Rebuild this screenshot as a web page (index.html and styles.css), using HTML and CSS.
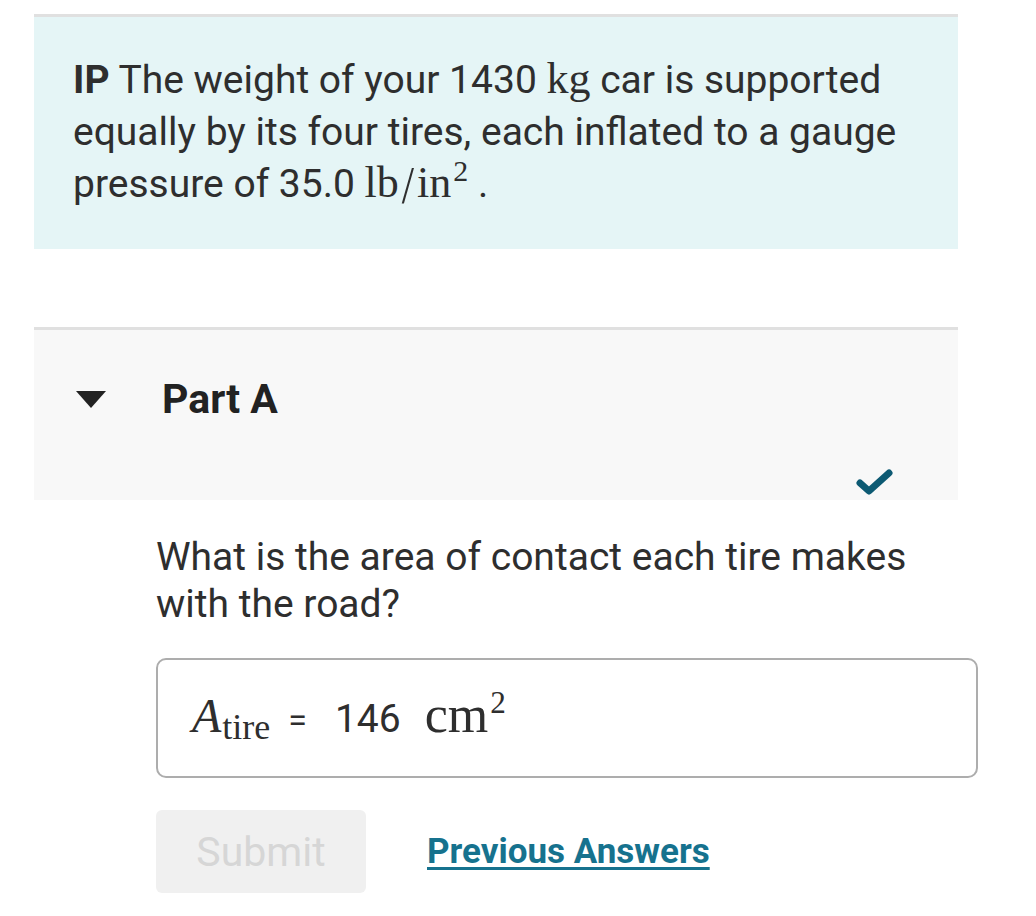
FILE: index.html
```html
<!DOCTYPE html>
<html lang="en">

<head>
    <meta charset="UTF-8">
    <meta name="viewport" content="width=device-width, initial-scale=1.0">
    <title>Part A</title>
    <link rel="stylesheet" href="styles.css">
</head>

<body>
    <div class="page">
        <div class="intro">
            <p><b>IP</b> The weight of your 1430 <span class="math">kg</span> car is supported
                equally by its four tires, each inflated to a gauge pressure of 35.0
                <span class="math">lb<span class="slash">/</span>in<sup>2</sup></span> .</p>
        </div>

        <div class="part">
            <div class="part-head">
                <span class="caret"></span>
                <h2>Part A</h2>
            </div>
            <div class="part-status">
                <svg class="check" width="38" height="28" viewBox="0 0 38 28">
                    <path d="M4 15 L13 23 L33 5" fill="none" stroke="#0d5a73" stroke-width="7"
                        stroke-linecap="round" stroke-linejoin="round" />
                </svg>
            </div>
        </div>

        <div class="question">
            <p>What is the area of contact each tire makes with the road?</p>
            <div class="answer">
                <div class="expr">
                    <span class="math var">A<sub>tire</sub></span>
                    <span class="eq">=</span>
                    <span class="num">146</span>
                    <span class="math unit">cm<sup>2</sup></span>
                </div>
            </div>
            <div class="actions">
                <button class="submit" disabled>Submit</button>
                <a href="#" class="prev">Previous Answers</a>
            </div>
        </div>
    </div>
</body>

</html>
```

FILE: styles.css
```css
*{
    margin: 0;
    padding: 0;
    box-sizing: border-box;
}
body{
    background-color: #fff;
    font-family: Roboto, "Noto Sans", sans-serif;
    color: #2e2e2e;
}
.page{
    width: 1000px;
    padding: 14px 0 0 34px;
}
.intro{
    width: 924px;
    border-top: 3px solid #e0e0e0;
    background-color: #e5f5f6;
    padding: 37px 39px 39px 39px;
    font-size: 39px;
    line-height: 52px;
}
.intro b{
    font-weight: 700;
}
.math{
    font-family: "Liberation Serif", "DejaVu Serif", serif;
    font-size: 44px;
    line-height: 0;
}
.slash{
    display: inline-block;
    margin: 0 3px;
    transform: scaleY(1.2) translateY(3px);
}
.math sup{
    font-size: 0.68em;
    vertical-align: 0.55em;
    line-height: 0;
    margin-left: 2px;
}
.part{
    width: 924px;
    margin-top: 78px;
    border-top: 3px solid #e0e0e0;
    background-color: #f8f8f8;
    height: 173px;
    padding: 0 0 0 42px;
    display: flex;
    flex-direction: column;
}
.part-head{
    display: flex;
    align-items: center;
    height: 138px;
}
.caret{
    width: 0;
    height: 0;
    border-left: 15px solid transparent;
    border-right: 15px solid transparent;
    border-top: 17px solid #222;
}
.part-head h2{
    margin-left: 56px;
    font-size: 41px;
    font-weight: 700;
    color: #222;
}
.part-status{
    display: flex;
    justify-content: flex-end;
    padding-right: 64px;
}
.question{
    padding: 34px 0 0 122px;
}
.question p{
    font-size: 39px;
    line-height: 47px;
    width: 822px;
}
.answer{
    margin-top: 30px;
    width: 822px;
    height: 120px;
    border: 2px solid #adadad;
    border-radius: 10px;
    padding: 10px 0 0 34px;
    display: flex;
    align-items: center;
}
.expr{
    line-height: 60px;
    white-space: nowrap;
}
.var{
    font-style: italic;
    font-size: 48px;
}
.var sub{
    font-style: normal;
    font-size: 36px;
    vertical-align: -0.2em;
    line-height: 0;
    margin-left: 1px;
}
.eq{
    font-size: 34px;
    margin: 0 24px 0 14px;
}
.num{
    font-size: 39px;
}
.unit{
    margin-left: 20px;
    font-size: 52px;
}
.unit sup{
    font-size: 0.6em;
    vertical-align: 0.6em;
}
.actions{
    margin-top: 32px;
    display: flex;
    align-items: center;
}
.submit{
    width: 210px;
    height: 83px;
    border: none;
    border-radius: 6px;
    background-color: #f0f0f0;
    color: #d6d6d6;
    font-family: Roboto, sans-serif;
    font-size: 41px;
}
.prev{
    margin-left: 61px;
    font-size: 35px;
    font-weight: 700;
    color: #16728e;
    text-decoration: underline;
    text-decoration-thickness: 3px;
    text-underline-offset: 4px;
}
```
